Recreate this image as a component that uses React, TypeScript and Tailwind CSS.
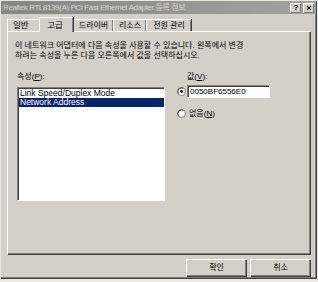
import React from 'react';

const ko = { fontFamily: '"Liberation Sans", "Noto Sans CJK KR", sans-serif' };

const Radio = ({ checked }: { checked?: boolean }) => (
  <svg width="9" height="9" viewBox="0 0 9 9" className="shrink-0">
    <circle cx="4.5" cy="4.5" r="4" fill="#fff" stroke="#808080" strokeWidth="1" />
    <path d="M1.2 6.5 A4 4 0 0 1 6.5 1.2" fill="none" stroke="#404040" strokeWidth="1" />
    {checked && <circle cx="4.5" cy="4.5" r="1.4" fill="#000" />}
  </svg>
);

const Tab = ({ label, active, w }: { label: string; active?: boolean; w: string }) =>
  active ? (
    <div className={`relative z-10 -mb-[1px] flex h-[15px] items-center justify-center border-l border-t border-white bg-[#d4d0c8] pr-[3px] shadow-[inset_-1px_0_#808080,1px_0_#404040] ${w}`}>
      <span className="text-[8.5px] leading-none text-black">{label}</span>
    </div>
  ) : (
    <div className={`mt-[2px] flex h-[12px] items-center justify-center border-l border-t border-white shadow-[inset_-1px_0_#808080,1px_0_#404040] ${w}`}>
      <span className="text-[8px] leading-none text-black">{label}</span>
    </div>
  );

const WinButton = ({ label }: { label: string }) => (
  <button
    type="button"
    className="flex h-[17px] w-[60px] items-center justify-center border-l border-t border-white bg-[#d4d0c8] text-[8px] text-black shadow-[inset_-1px_-1px_#808080,1px_1px_#404040]"
  >
    {label}
  </button>
);

export default function App() {
  return (
    <div className="h-[282px] w-[318px] bg-[#ecebe8]" style={ko}>
      <div className="flex h-[278px] w-[316px] flex-col border-l border-t border-[#e8e6e0] bg-[#d4d0c8] shadow-[inset_-1px_-1px_#808080,1px_1px_#404040]">
        {/* title bar */}
        <div className="flex h-[13px] items-center justify-between bg-gradient-to-r from-[#858585] to-[#a3a3a3] pl-[2px] pr-[2px]">
          <span className="whitespace-nowrap text-[8px] leading-none tracking-[-0.4px] text-[#d8d6d0]">
            Realtek RTL8139(A) PCI Fast Ethernet Adapter 등록 정보
          </span>
          <div className="flex gap-[2px]">
            <div className="flex h-[10px] w-[11px] items-center justify-center border-l border-t border-white bg-[#d4d0c8] text-[8px] font-bold leading-none text-black shadow-[inset_-1px_-1px_#808080]">
              ?
            </div>
            <div className="flex h-[10px] w-[11px] items-center justify-center border-l border-t border-white bg-[#d4d0c8] text-[9px] font-bold leading-none text-black shadow-[inset_-1px_-1px_#808080]">
              ×
            </div>
          </div>
        </div>

        {/* tabs */}
        <div className="ml-[6px] mt-[3px] flex items-end">
          <div className="mt-[2px] flex h-[12px] w-[32px] items-center border-l border-t border-white pl-[5px]">
            <span className="text-[8.5px] leading-none text-black">일반</span>
          </div>
          <Tab label="고급" active w="w-[34px]" />
          <Tab label="드라이버" w="w-[40px]" />
          <Tab label="리소스" w="w-[33px]" />
          <Tab label="전원 관리" w="w-[45px]" />
        </div>

        {/* panel */}
        <div className="ml-[6px] h-[223px] w-[303px] border-l border-t border-white shadow-[inset_-1px_-1px_#808080,1px_1px_#404040]">
          <div className="pl-[7px] pt-[9px] text-[8px] leading-[10px] text-black">
            <div>이 네트워크 어댑터에 다음 속성을 사용할 수 있습니다. 왼쪽에서 변경</div>
            <div>하려는 속성을 누른 다음 오른쪽에서 값을 선택하십시오.</div>
          </div>

          <div className="mt-[11px] flex pl-[9px]">
            <div className="w-[147px]">
              <div className="h-[15px] text-[8px] leading-[10px] text-black">
                속성(<span className="underline">P</span>):
              </div>
              <div className="h-[113px] border-l border-t border-[#808080] bg-white pl-[1px] pt-[1px] shadow-[inset_1px_1px_#404040,1px_1px_#fff]">
                <div className="h-[9px] overflow-hidden pl-[1px] text-[8.5px] leading-[9px] text-black">Link Speed/Duplex Mode</div>
                <div className="h-[9px] overflow-hidden bg-[#0a246a] pl-[1px] text-[8.5px] leading-[9px] text-white">Network Address</div>
              </div>
            </div>

            <div className="ml-[13px] flex flex-col">
              <div className="ml-[10px] h-[13px] text-[8px] leading-[10px] text-black">
                값(<span className="underline">V</span>):
              </div>
              <div className="flex items-center gap-[1px]">
                <Radio checked />
                <div className="flex h-[12px] w-[82px] items-center border-l border-t border-[#808080] bg-white pl-[2px] text-[8px] text-black shadow-[inset_1px_1px_#404040,1px_1px_#fff]">
                  0050BF6556E0
                </div>
              </div>
              <div className="mt-[12px] flex items-center gap-[3px]">
                <Radio />
                <span className="text-[8px] leading-none text-black">
                  없음(<span className="underline">N</span>)
                </span>
              </div>
            </div>
          </div>
        </div>

        {/* buttons */}
        <div className="mt-[5px] flex justify-end gap-[4px] pr-[6px]">
          <WinButton label="확인" />
          <WinButton label="취소" />
        </div>
      </div>
    </div>
  );
}
